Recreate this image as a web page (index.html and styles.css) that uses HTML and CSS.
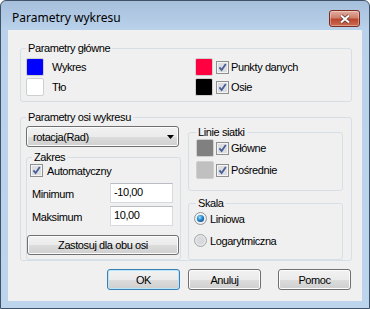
FILE: index.html
```html
<!DOCTYPE html>
<html lang="pl">
<head>
    <meta charset="UTF-8">
    <title>Parametry wykresu</title>
    <link rel="stylesheet" href="styles.css">
</head>
<body>

<div class="window">
    <div class="titlebar">
        <span class="title">Parametry wykresu</span>
        <span class="close-btn">
            <svg width="12" height="10" viewBox="0 0 12 10">
                <path d="M2 1.5 L10 8.5 M10 1.5 L2 8.5" stroke="#5a3a36" stroke-width="3.6"/>
                <path d="M2 1.5 L10 8.5 M10 1.5 L2 8.5" stroke="#fff" stroke-width="2"/>
            </svg>
        </span>
    </div>

    <div class="client">
        <fieldset class="group group-main">
            <legend>Parametry główne</legend>
            <div class="main-grid">
                <div class="item">
                    <span class="swatch swatch-blue"></span>
                    <span class="swatch-label">Wykres</span>
                </div>
                <div class="item">
                    <span class="swatch swatch-red"></span>
                    <svg class="check" width="13" height="13" viewBox="0 0 13 13">
                        <rect x="0.5" y="0.5" width="12" height="12" fill="#f4f4f4" stroke="#8e8f8f"/>
                        <rect x="2" y="2" width="9" height="9" fill="#dcdee2"/>
                        <path d="M3.4 6.4 L5.6 9 L9.8 3" fill="none" stroke="#4a5f97" stroke-width="1.8"/>
                    </svg>
                    <span class="check-label">Punkty danych</span>
                </div>
                <div class="item">
                    <span class="swatch swatch-white"></span>
                    <span class="swatch-label">Tło</span>
                </div>
                <div class="item">
                    <span class="swatch swatch-black"></span>
                    <svg class="check" width="13" height="13" viewBox="0 0 13 13">
                        <rect x="0.5" y="0.5" width="12" height="12" fill="#f4f4f4" stroke="#8e8f8f"/>
                        <rect x="2" y="2" width="9" height="9" fill="#dcdee2"/>
                        <path d="M3.4 6.4 L5.6 9 L9.8 3" fill="none" stroke="#4a5f97" stroke-width="1.8"/>
                    </svg>
                    <span class="check-label">Osie</span>
                </div>
            </div>
        </fieldset>

        <fieldset class="group group-axis">
            <legend>Parametry osi wykresu</legend>
            <div class="axis-cols">
                <div class="axis-left">
                    <div class="combo">
                        <span>rotacja(Rad)</span>
                        <svg width="7" height="4" viewBox="0 0 7 4"><path d="M0 0 H7 L3.5 4 Z" fill="#000"/></svg>
                    </div>

                    <fieldset class="group group-range">
                        <legend>Zakres</legend>
                        <div class="item auto-row">
                            <svg class="check" width="13" height="13" viewBox="0 0 13 13">
                                <rect x="0.5" y="0.5" width="12" height="12" fill="#f4f4f4" stroke="#8e8f8f"/>
                                <rect x="2" y="2" width="9" height="9" fill="#dcdee2"/>
                                <path d="M3.4 6.4 L5.6 9 L9.8 3" fill="none" stroke="#4a5f97" stroke-width="1.8"/>
                            </svg>
                            <span class="auto-label">Automatyczny</span>
                        </div>
                        <div class="field-row">
                            <span class="field-label">Minimum</span>
                            <span class="textbox">-10,00</span>
                        </div>
                        <div class="field-row field-row-max">
                            <span class="field-label">Maksimum</span>
                            <span class="textbox">10,00</span>
                        </div>
                        <div class="btn btn-apply">Zastosuj dla obu osi</div>
                    </fieldset>
                </div>

                <div class="axis-right">
                    <fieldset class="group group-grid">
                        <legend>Linie siatki</legend>
                        <div class="item">
                            <span class="swatch swatch-gray"></span>
                            <svg class="check" width="13" height="13" viewBox="0 0 13 13">
                                <rect x="0.5" y="0.5" width="12" height="12" fill="#f4f4f4" stroke="#8e8f8f"/>
                                <rect x="2" y="2" width="9" height="9" fill="#dcdee2"/>
                                <path d="M3.4 6.4 L5.6 9 L9.8 3" fill="none" stroke="#4a5f97" stroke-width="1.8"/>
                            </svg>
                            <span class="check-label">Główne</span>
                        </div>
                        <div class="item item-second">
                            <span class="swatch swatch-silver"></span>
                            <svg class="check" width="13" height="13" viewBox="0 0 13 13">
                                <rect x="0.5" y="0.5" width="12" height="12" fill="#f4f4f4" stroke="#8e8f8f"/>
                                <rect x="2" y="2" width="9" height="9" fill="#dcdee2"/>
                                <path d="M3.4 6.4 L5.6 9 L9.8 3" fill="none" stroke="#4a5f97" stroke-width="1.8"/>
                            </svg>
                            <span class="check-label">Pośrednie</span>
                        </div>
                    </fieldset>

                    <fieldset class="group group-scale">
                        <legend>Skala</legend>
                        <div class="radio-row">
                            <svg width="13" height="13" viewBox="0 0 13 13">
                                <defs>
                                    <radialGradient id="dot" cx="0.4" cy="0.35" r="0.7">
                                        <stop offset="0" stop-color="#9fe4ff"/>
                                        <stop offset="0.5" stop-color="#2a8ed4"/>
                                        <stop offset="1" stop-color="#0d4f86"/>
                                    </radialGradient>
                                </defs>
                                <circle cx="6.5" cy="6.5" r="6" fill="#eef0f2" stroke="#929496"/>
                                <circle cx="6.5" cy="6.5" r="3.6" fill="url(#dot)"/>
                            </svg>
                            <span class="radio-label">Liniowa</span>
                        </div>
                        <div class="radio-row radio-row-second">
                            <svg width="13" height="13" viewBox="0 0 13 13">
                                <circle cx="6.5" cy="6.5" r="6" fill="#e6e7e9" stroke="#a3a5a7"/>
                                <circle cx="6.5" cy="6.5" r="4" fill="#d7d9dc"/>
                            </svg>
                            <span class="radio-label">Logarytmiczna</span>
                        </div>
                    </fieldset>
                </div>
            </div>
        </fieldset>

        <div class="dialog-buttons">
            <div class="btn btn-default">OK</div>
            <div class="btn btn-cancel">Anuluj</div>
            <div class="btn btn-help">Pomoc</div>
        </div>
    </div>
</div>

</body>
</html>
```

FILE: styles.css
```css
* {
    box-sizing: border-box;
}
body {
    margin: 0;
    font-family: "Liberation Sans", Arial, sans-serif;
    font-size: 11px;
    letter-spacing: -0.4px;
    color: #000;
    background: #fff;
}
.window {
    width: 370px;
    height: 309px;
    border: 1px solid #3f5268;
    border-radius: 6px 6px 0 0;
    background: linear-gradient(#a6bfdc, #b9d1ea 28px, #bcd4ec);
    padding: 0 7px 7px;
    display: flex;
    flex-direction: column;
}
.titlebar {
    height: 29px;
    display: flex;
    justify-content: space-between;
    align-items: flex-start;
    padding: 0 2px 0 4px;
}
.title {
    font-family: "Noto Sans", sans-serif;
    font-size: 12px;
    letter-spacing: 0;
    line-height: 17px;
    margin-top: 8px;
}
.close-btn {
    margin-top: 9px;
    width: 31px;
    height: 17px;
    border: 1px solid #7b2d22;
    border-radius: 3px;
    background: linear-gradient(#e3ad9f, #d0806c 45%, #bb4630 55%, #cc6a52);
    box-shadow: inset 0 0 0 1px rgba(255, 255, 255, 0.35);
    display: flex;
    align-items: center;
    justify-content: center;
}
.client {
    flex: 1;
    background: #f0f0f0;
    padding: 11px 10px 0 12px;
}
.group {
    margin: 0;
    min-width: 0;
    border: 1px solid #d5dfe5;
    border-radius: 3px;
    padding: 0;
}
.group legend {
    padding: 0 2px;
    line-height: 14px;
}
.item {
    display: flex;
    align-items: center;
    height: 18px;
}
.swatch {
    width: 18px;
    height: 18px;
    border: 1px solid #cfcfcf;
    border-radius: 2px;
}
.swatch-blue { background: #0000ff; }
.swatch-white { background: #fff; }
.swatch-red { background: #ff0040; }
.swatch-black { background: #000; }
.swatch-gray { background: #808080; }
.swatch-silver { background: #c0c0c0; }
.swatch-label {
    margin-left: 8px;
}
.check {
    margin-left: 3px;
    flex: none;
}
.check-label {
    margin-left: 2px;
}

/* Parametry glowne */
.group-main {
    padding: 3px 10px 5px 5px;
}
.main-grid {
    display: grid;
    grid-template-columns: 169px 1fr;
    grid-auto-rows: 18px;
    row-gap: 2px;
}

/* Parametry osi */
.group-axis {
    margin-top: 8px;
    padding: 2px 8px 0 5px;
}
.axis-cols {
    display: flex;
    gap: 7px;
}
.axis-left {
    width: 155px;
    display: flex;
    flex-direction: column;
}
.axis-right {
    width: 155px;
    margin-top: -1px;
}
.combo {
    width: 153px;
    height: 21px;
    display: flex;
    align-items: center;
    justify-content: space-between;
    padding: 0 4px 0 6px;
    border: 1px solid #707070;
    border-radius: 3px;
    background: linear-gradient(#f2f2f2, #ebebeb 50%, #dddddd 50%, #cfcfcf);
    box-shadow: inset 0 0 0 1px #fcfcfc;
}
.group-range {
    flex: 1;
    margin-top: 3px;
}
.group-range legend {
    margin-left: 5px;
}
.auto-row {
    height: 13px;
}
.auto-row .check {
    margin-left: 3px;
}
.auto-label {
    margin-left: 4px;
}
.field-row {
    display: flex;
    align-items: center;
    margin-top: 6px;
}
.field-row-max {
    margin-top: 3px;
}
.field-label {
    width: 83px;
    padding: 2px 0 0 5px;
}
.textbox {
    width: 63px;
    height: 20px;
    padding: 2px 0 0 3px;
    background: #fff;
    border: 1px solid #d6d9de;
    border-top-color: #b9bcc3;
}
.btn {
    height: 21px;
    display: flex;
    align-items: center;
    justify-content: center;
    border: 1px solid #707070;
    border-radius: 3px;
    background: linear-gradient(#f2f2f2, #ebebeb 50%, #dddddd 50%, #cfcfcf);
    box-shadow: inset 0 0 0 1px #fcfcfc;
}
.btn-apply {
    width: 152px;
    height: 20px;
    margin-top: 9px;
}
.group-grid {
    padding: 0 0 11px 7px;
}
.item-second {
    margin-top: 4px;
}
.swatch-gray + .check,
.swatch-silver + .check {
    margin-left: 2px;
}
.group-scale {
    margin-top: 5px;
    padding: 2px 0 12px 5px;
}
.group-scale legend {
    margin-left: 2px;
}
.radio-row {
    display: flex;
    align-items: center;
    height: 13px;
}
.radio-row-second {
    margin-top: 9px;
}
.radio-label {
    margin-left: 3px;
}

/* OK / Anuluj / Pomoc */
.dialog-buttons {
    display: flex;
    justify-content: flex-end;
    margin-top: 8px;
}
.dialog-buttons .btn {
    width: 73px;
}
.btn-default {
    border-color: #3c7fb1;
    box-shadow: inset 0 0 0 1px #b6e6fb;
}
.btn-cancel {
    margin-left: 8px;
}
.btn-help {
    margin-left: 17px;
    margin-right: 1px;
}
```
